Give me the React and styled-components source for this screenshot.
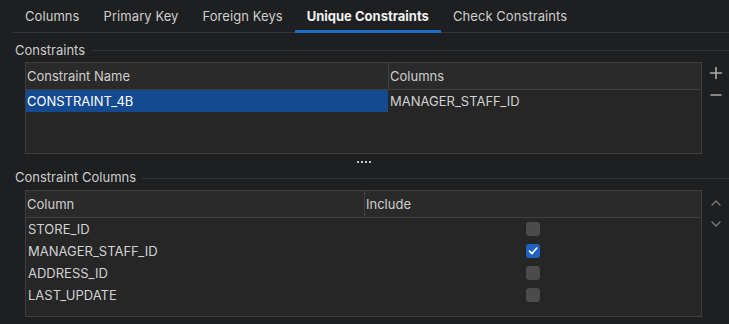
import React from 'react'
import styled, { createGlobalStyle } from 'styled-components'

const GlobalStyle = createGlobalStyle`
  html, body {
    margin: 0;
    padding: 0;
    background: #1e1f20;
  }
  * { box-sizing: border-box; }
`

const constraints = [{ name: 'CONSTRAINT_4B', columns: 'MANAGER_STAFF_ID' }]

const columns = [
  { name: 'STORE_ID', include: false },
  { name: 'MANAGER_STAFF_ID', include: true },
  { name: 'ADDRESS_ID', include: false },
  { name: 'LAST_UPDATE', include: false },
]

const tabs = ['Columns', 'Primary Key', 'Foreign Keys', 'Unique Constraints', 'Check Constraints']

const Page = styled.div`
  width: 729px;
  height: 324px;
  overflow: hidden;
  background: #1e1f20;
  color: #d2d2d2;
  font-family: Inter, 'Noto Sans', sans-serif;
  font-size: 13px;
  display: flex;
  flex-direction: column;
`

const TabBar = styled.div`
  display: flex;
  height: 33px;
  margin-left: 13px;
  border-bottom: 1px solid #363636;
`

const Tab = styled.div`
  display: flex;
  align-items: center;
  padding: 1px 12px 0 12px;
  color: ${p => (p.$active ? '#f0f0f0' : '#cfcfcf')};
  font-weight: ${p => (p.$active ? 700 : 400)};
  letter-spacing: ${p => (p.$active ? 0 : 0.07)}px;
  border-bottom: 3px solid ${p => (p.$active ? '#1f6cc8' : 'transparent')};
  margin-bottom: -1px;
`

const Legend = styled.div`
  display: flex;
  align-items: center;
  gap: 6px;
  height: ${p => p.$h}px;
  padding-top: ${p => p.$pad || 0}px;
  padding-left: 15px;
  color: #cdcdcd;
  &::after {
    content: '';
    flex: 1;
    height: 1px;
    background: #333;
    margin-top: 2px;
  }
`

const Body = styled.div`
  display: flex;
  padding-left: 25px;
  margin-top: ${p => p.$top || 0}px;
`

const Table = styled.div`
  flex: 1;
  height: ${p => p.$h}px;
  background: #262626;
  border: 1px solid #3e3e3e;
  display: flex;
  flex-direction: column;
`

const Row = styled.div`
  display: grid;
  grid-template-columns: ${p => p.$cols};
  height: ${p => p.$h}px;
`

const HeadCell = styled.div`
  display: flex;
  align-items: center;
  padding-left: 1px;
  background: #2a2a2a;
  border-bottom: 1px solid #404040;
  border-right: 1px solid #404040;
  color: #cfcfcf;
  &:last-child { border-right: none; }
`

const Cell = styled.div`
  display: flex;
  align-items: center;
  justify-content: ${p => (p.$center ? 'center' : 'flex-start')};
  padding-left: ${p => (p.$center ? 0 : p.$pad || 1)}px;
  background: ${p => (p.$selected ? '#134a90' : 'transparent')};
  color: ${p => (p.$selected ? '#ffffff' : '#d2d2d2')};
  margin-right: ${p => (p.$selected ? 1 : 0)}px;
`

const SideBar = styled.div`
  width: 27px;
  display: flex;
  flex-direction: column;
  align-items: center;
  padding-top: ${p => p.$top}px;
  gap: ${p => p.$gap}px;
`

const Splitter = styled.div`
  height: 16px;
  display: flex;
  justify-content: center;
  align-items: center;
  & span {
    width: 15px;
    height: 2px;
    background: repeating-linear-gradient(90deg, #c8c8c8 0 2px, transparent 2px 4px);
  }
`

const Check = styled.div`
  width: 14px;
  height: 14px;
  border-radius: 3px;
  background: ${p => (p.$on ? '#1f62c0' : '#4b4b4b')};
  display: flex;
  align-items: center;
  justify-content: center;
`

const Icon = ({ children }) => (
  <svg width="14" height="14" viewBox="0 0 14 14" fill="none" strokeLinecap="round" strokeLinejoin="round">
    {children}
  </svg>
)

const App = () => (
  <Page>
    <GlobalStyle />
    <TabBar>
      {tabs.map(t => (
        <Tab key={t} $active={t === 'Unique Constraints'}>{t}</Tab>
      ))}
    </TabBar>

    <Legend $h={29} $pad={4}>Constraints</Legend>
    <Body>
      <Table $h={92}>
        <Row $cols="363px 1fr" $h={27}>
          <HeadCell>Constraint Name</HeadCell>
          <HeadCell>Columns</HeadCell>
        </Row>
        {constraints.map(c => (
          <Row key={c.name} $cols="363px 1fr" $h={22}>
            <Cell $selected>{c.name}</Cell>
            <Cell>{c.columns}</Cell>
          </Row>
        ))}
      </Table>
      <SideBar $top={4} $gap={8}>
        <Icon>
          <path d="M7 1.5v11M1.5 7h11" stroke="#a8a8a8" strokeWidth="1.6" />
        </Icon>
        <Icon>
          <path d="M2 7h10" stroke="#a8a8a8" strokeWidth="1.6" />
        </Icon>
      </SideBar>
    </Body>

    <Splitter><span /></Splitter>

    <Legend $h={14}>Constraint Columns</Legend>
    <Body $top={6}>
      <Table $h={127}>
        <Row $cols="339px 1fr" $h={27}>
          <HeadCell>Column</HeadCell>
          <HeadCell>Include</HeadCell>
        </Row>
        {columns.map(c => (
          <Row key={c.name} $cols="339px 1fr" $h={22}>
            <Cell $pad={2}>{c.name}</Cell>
            <Cell $center>
              <Check $on={c.include}>
                {c.include && (
                  <svg width="10" height="10" viewBox="0 0 10 10" fill="none">
                    <path d="M1.5 5.2l2.4 2.4L8.6 2.2" stroke="#fff" strokeWidth="1.7" strokeLinecap="round" strokeLinejoin="round" />
                  </svg>
                )}
              </Check>
            </Cell>
          </Row>
        ))}
      </Table>
      <SideBar $top={6} $gap={7}>
        <Icon>
          <path d="M3 9l4-4 4 4" stroke="#7a7a7a" strokeWidth="1.4" />
        </Icon>
        <Icon>
          <path d="M3 5l4 4 4-4" stroke="#7a7a7a" strokeWidth="1.4" />
        </Icon>
      </SideBar>
    </Body>
  </Page>
)

export default App
